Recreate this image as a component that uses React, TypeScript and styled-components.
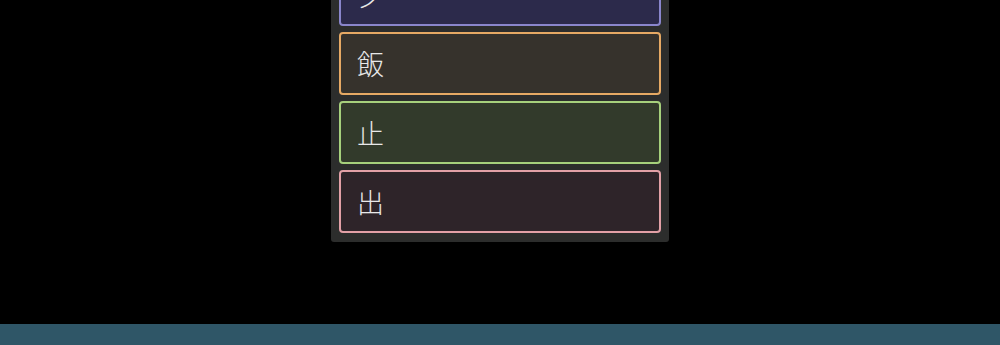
import React from "react";
import styled, { createGlobalStyle } from "styled-components";

const Global = createGlobalStyle`
  html, body { margin: 0; padding: 0; background: #000; }
  body { font-family: "Noto Sans CJK JP", "Noto Sans", sans-serif; overflow: hidden; }
`;

const Page = styled.div`
  height: 100vh;
  display: flex;
  flex-direction: column;
  background: #000;
`;

const Main = styled.main`
  flex: 1;
  display: flex;
  justify-content: center;
  align-items: flex-start;
  overflow: hidden;
`;

const Panel = styled.div`
  width: 338px;
  box-sizing: border-box;
  margin-top: -46px;
  padding: 9px 8px;
  background: #2c2d2c;
  border-radius: 0 0 3px 3px;
  display: flex;
  flex-direction: column;
  gap: 6px;
`;

type Tone = { border: string; bg: string };

const Card = styled.div<{ $tone: Tone }>`
  height: 63px;
  box-sizing: border-box;
  border: 2px solid ${(p) => p.$tone.border};
  background: ${(p) => p.$tone.bg};
  border-radius: 4px;
  display: flex;
  align-items: center;
  padding: 0 16px;
  color: #e8e8e8;
  font-size: 27px;
  font-weight: 300;
  line-height: 1;
`;

const Footer = styled.footer`
  height: 21px;
  background: #2f5667;
`;

const tones: Record<string, Tone> = {
  purple: { border: "#8a86cc", bg: "#2c2a4b" },
  orange: { border: "#e6a964", bg: "#36322c" },
  green: { border: "#a6d07c", bg: "#323a2b" },
  red: { border: "#e2a0a6", bg: "#2e2429" },
};

const items = [
  { ch: "夕", tone: tones.purple },
  { ch: "飯", tone: tones.orange },
  { ch: "止", tone: tones.green },
  { ch: "出", tone: tones.red },
];

export default function App() {
  return (
    <>
      <Global />
      <Page>
        <Main>
          <Panel>
            {items.map((it) => (
              <Card key={it.ch} $tone={it.tone}>
                {it.ch}
              </Card>
            ))}
          </Panel>
        </Main>
        <Footer />
      </Page>
    </>
  );
}
